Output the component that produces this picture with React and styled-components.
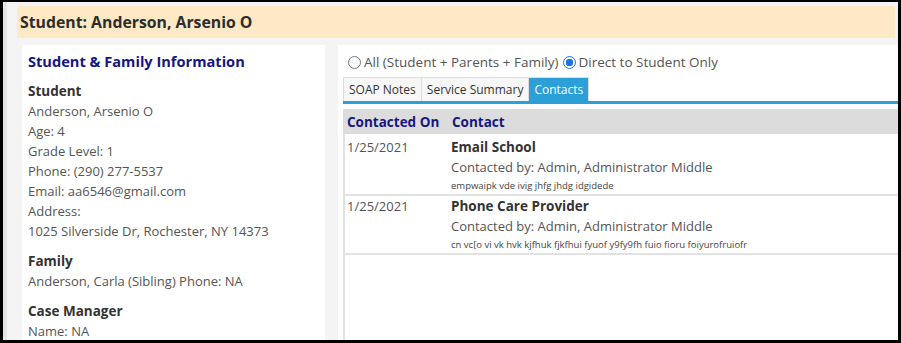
import React, { useState } from "react";
import styled, { createGlobalStyle } from "styled-components";

const GlobalStyle = createGlobalStyle`
  html, body {
    margin: 0;
    padding: 0;
    background: #000;
  }
  body {
    font-family: "Open Sans", "Noto Sans", Arial, sans-serif;
    color: #555;
  }
`;

const contacts = [
  {
    id: 1,
    date: "1/25/2021",
    title: "Email School",
    by: "Contacted by: Admin, Administrator Middle",
    note: "empwaipk vde ivig jhfg jhdg idgidede",
  },
  {
    id: 2,
    date: "1/25/2021",
    title: "Phone Care Provider",
    by: "Contacted by: Admin, Administrator Middle",
    note: "cn vc[o vi vk hvk kjfhuk fjkfhui fyuof y9fy9fh fuio fioru foiyurofruiofr",
  },
];

const studentLines = [
  "Anderson, Arsenio O",
  "Age: 4",
  "Grade Level: 1",
  "Phone: (290) 277-5537",
  "Email: aa6546@gmail.com",
  "Address:",
  "1025 Silverside Dr, Rochester, NY 14373",
];

const Frame = styled.div`
  box-sizing: border-box;
  width: 901px;
  height: 343px;
  overflow: hidden;
  border: 3px solid #000;
  border-top-width: 2px;
  background: #f4f4f4;
  display: flex;
  flex-direction: column;
  padding: 4px 0 0 14px;
  box-shadow: inset 4px 0 0 #e4e4e4;
`;

const TitleBar = styled.div`
  height: 32px;
  margin-right: 3px;
  background: #fee9c6;
  display: flex;
  align-items: center;
  padding-left: 3px;
  font-size: 15.8px;
  font-weight: 700;
  color: #2d2d2d;
`;

const Columns = styled.div`
  flex: 1;
  display: flex;
  gap: 13px;
  margin-top: 7px;
  padding-left: 5px;
  min-height: 0;
`;

const InfoPanel = styled.div`
  width: 303px;
  flex-shrink: 0;
  background: #fff;
  padding: 5px 6px 0;
  box-sizing: border-box;
`;

const PanelTitle = styled.h2`
  margin: 0 0 9px;
  font-size: 14.6px;
  line-height: 22px;
  font-weight: 700;
  color: #161682;
`;

const Section = styled.div`
  margin-bottom: 10px;
`;

const SectionLabel = styled.div`
  font-size: 13.5px;
  line-height: 20px;
  font-weight: 700;
  color: #333;
`;

const InfoLine = styled.div`
  font-size: 13px;
  line-height: 20px;
  color: #555;
  white-space: nowrap;
`;

const ContentPanel = styled.div`
  flex: 1;
  background: #fff;
  padding: 6px 0 0 5px;
  display: flex;
  flex-direction: column;
`;

const RadioRow = styled.div`
  display: flex;
  align-items: center;
  gap: 4px;
  height: 22px;
  padding-left: 5px;
  font-size: 13.5px;
  color: #555;
`;

const RadioOption = styled.label`
  display: flex;
  align-items: center;
  gap: 3px;
  cursor: pointer;
`;

const RadioDot = styled.span`
  width: 11px;
  height: 11px;
  border-radius: 50%;
  border: 1px solid ${(p) => (p.$checked ? "#1a73e8" : "#777")};
  background: ${(p) =>
    p.$checked ? "radial-gradient(circle, #1a73e8 0 3.5px, #fff 4px)" : "#fff"};
  flex-shrink: 0;
`;

const TabBar = styled.div`
  display: flex;
  margin-top: 4px;
  border-bottom: 3px solid #2a9fd8;
`;

const Tab = styled.button`
  font-family: inherit;
  font-size: 12px;
  height: 24px;
  padding: 0 5px;
  border: 1px solid #ddd;
  border-bottom: none;
  border-left-width: ${(p) => (p.$first ? "1px" : "0")};
  background: ${(p) => (p.$active ? "#2a9fd8" : "#f7f7f7")};
  color: ${(p) => (p.$active ? "#fff" : "#333")};
  cursor: pointer;
`;

const Table = styled.div`
  margin-top: 5px;
  flex: 1;
  border-left: 2px solid #e2e2e2;
`;

const HeadRow = styled.div`
  display: grid;
  grid-template-columns: 105px 1fr;
  height: 25px;
  align-items: center;
  background: #dcdcdc;
  margin: 0 0 3px -2px;
  padding-left: 4px;
  font-size: 13.5px;
  font-weight: 700;
  color: #161682;
`;

const Row = styled.div`
  display: grid;
  grid-template-columns: 104px 1fr;
  padding-left: 2px;
  border-bottom: 2px solid #e2e2e2;
`;

const Cell = styled.div`
  font-size: 13px;
  line-height: 20px;
  color: #555;
`;

const ContactTitle = styled.div`
  font-size: 13.5px;
  line-height: 20px;
  font-weight: 700;
  color: #333;
`;

const Note = styled.div`
  font-size: 9.5px;
  line-height: 17px;
  color: #444;
  white-space: nowrap;
`;

export default function App() {
  const [scope, setScope] = useState("direct");
  const [tab, setTab] = useState("Contacts");

  return (
    <>
      <GlobalStyle />
      <Frame>
        <TitleBar>Student: Anderson, Arsenio O</TitleBar>
        <Columns>
          <InfoPanel>
            <PanelTitle>Student &amp; Family Information</PanelTitle>
            <Section>
              <SectionLabel>Student</SectionLabel>
              {studentLines.map((line) => (
                <InfoLine key={line}>{line}</InfoLine>
              ))}
            </Section>
            <Section>
              <SectionLabel>Family</SectionLabel>
              <InfoLine>Anderson, Carla (Sibling) Phone: NA</InfoLine>
            </Section>
            <Section>
              <SectionLabel>Case Manager</SectionLabel>
              <InfoLine>Name: NA</InfoLine>
            </Section>
          </InfoPanel>

          <ContentPanel>
            <RadioRow>
              <RadioOption onClick={() => setScope("all")}>
                <RadioDot $checked={scope === "all"} />
                All (Student + Parents + Family)
              </RadioOption>
              <RadioOption onClick={() => setScope("direct")}>
                <RadioDot $checked={scope === "direct"} />
                Direct to Student Only
              </RadioOption>
            </RadioRow>

            <TabBar>
              {["SOAP Notes", "Service Summary", "Contacts"].map((t, i) => (
                <Tab
                  key={t}
                  $first={i === 0}
                  $active={tab === t}
                  onClick={() => setTab(t)}
                >
                  {t}
                </Tab>
              ))}
            </TabBar>

            <Table>
              <HeadRow>
                <span>Contacted On</span>
                <span>Contact</span>
              </HeadRow>
              {contacts.map((c) => (
                <Row key={c.id}>
                  <Cell>{c.date}</Cell>
                  <div>
                    <ContactTitle>{c.title}</ContactTitle>
                    <Cell>{c.by}</Cell>
                    <Note>{c.note}</Note>
                  </div>
                </Row>
              ))}
            </Table>
          </ContentPanel>
        </Columns>
      </Frame>
    </>
  );
}
